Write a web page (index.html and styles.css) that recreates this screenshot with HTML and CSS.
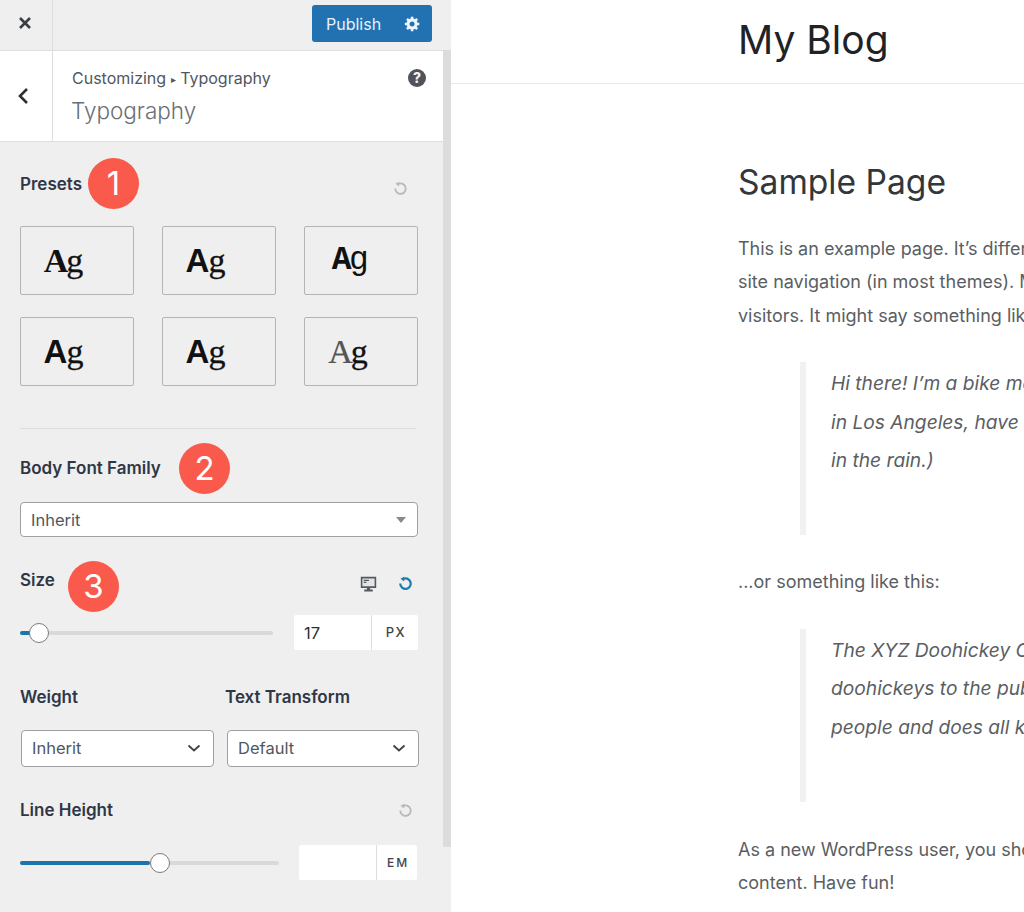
FILE: index.html
```html
<!DOCTYPE html>
<html lang="en">
<head>
<meta charset="utf-8">
<title>Typography</title>
<link rel="stylesheet" href="styles.css">
</head>
<body>
<div class="app">
  <aside class="sidebar">
    <div class="topbar">
      <div class="close-cell">
        <svg class="icon-close" viewBox="0 0 14 14"><path d="M2 2l10 10M12 2L2 12"/></svg>
      </div>
      <div class="publish">
        <span>Publish</span>
        <svg class="icon-gear" viewBox="0 0 20 20"><path d="M18 12h-2.18c-.17.7-.44 1.35-.81 1.93l1.54 1.54-2.1 2.1-1.54-1.54c-.58.36-1.23.63-1.91.79V19H8v-2.18c-.68-.16-1.33-.43-1.91-.79l-1.54 1.54-2.12-2.12 1.54-1.54c-.36-.58-.63-1.23-.79-1.91H1V9.03h2.17c.16-.7.44-1.35.8-1.94L2.43 5.55l2.1-2.1 1.54 1.54c.58-.37 1.24-.64 1.93-.81V2h3v2.18c.68.16 1.33.43 1.91.79l1.54-1.54 2.12 2.12-1.54 1.54c.36.59.64 1.24.8 1.94H18V12zm-8.5 1.5c1.66 0 3-1.34 3-3s-1.34-3-3-3-3 1.34-3 3 1.34 3 3 3z"/></svg>
      </div>
    </div>
    <div class="panel">
      <div class="panel-main">
        <header class="section-head">
          <div class="back-cell">
            <svg class="icon-back" viewBox="0 0 12 18"><path d="M10 2L3 9l7 7"/></svg>
          </div>
          <div class="section-title">
            <div class="crumb">Customizing <span class="crumb-sep">▸</span> Typography</div>
            <div class="title">Typography</div>
          </div>
          <div class="help">?</div>
        </header>
        <div class="controls">
          <div class="row-head presets-head">
            <span class="label">Presets</span>
            <svg class="icon-reset muted" viewBox="0 0 16 16"><path d="M5 3.4A5.6 5.6 0 1 1 2.4 8"/><path class="fill" d="M6.6 0.8v5L2.6 3z"/></svg>
          </div>
          <div class="presets">
            <div class="preset"><span class="serif bold">A</span><span class="serif">g</span></div>
            <div class="preset"><span class="sans bold">A</span><span class="serif">g</span></div>
            <div class="preset preset-narrow"><span class="mono bold">A</span><span class="mono">g</span></div>
            <div class="preset"><span class="sans bold">A</span><span class="serif">g</span></div>
            <div class="preset"><span class="sans bold">A</span><span class="serif">g</span></div>
            <div class="preset preset-last"><span class="serif faint">A</span><span class="serif">g</span></div>
          </div>
          <div class="divider"></div>
          <div class="row-head body-head"><span class="label">Body Font Family</span></div>
          <div class="select select-font">
            <span>Inherit</span>
            <span class="caret"></span>
          </div>
          <div class="row-head size-head">
            <span class="label">Size</span>
            <span class="head-icons">
              <svg class="icon-desktop" viewBox="0 0 16 16"><path class="screen" d="M1.500 1.500h13v9h-13z"/><path class="glyph" d="M3.500 3.500h5v1.200h-5zM3.500 5.500h2.500v1.200H3.500z"/><path class="glyph" d="M6.500 10.500h3v2.300h2.500V14.500H4v-1.700h2.500z"/></svg>
              <svg class="icon-reset active" viewBox="0 0 16 16"><path d="M5 3.4A5.6 5.6 0 1 1 2.4 8"/><path class="fill" d="M6.6 0.8v5L2.6 3z"/></svg>
            </span>
          </div>
          <div class="slider-row size-row">
            <div class="slider slider-size">
              <div class="slider-fill fill-size"></div>
              <div class="knob knob-size"></div>
            </div>
            <div class="unit-input input-size">
              <span class="value">17</span>
              <span class="unit">PX</span>
            </div>
          </div>
          <div class="pair pair-labels">
            <span class="label">Weight</span>
            <span class="label">Text Transform</span>
          </div>
          <div class="pair pair-selects">
            <div class="select select-small">
              <span>Inherit</span>
              <svg class="chevron" viewBox="0 0 14 8"><path d="M1.500 1.500L7 6.500l5.500-5"/></svg>
            </div>
            <div class="select select-small">
              <span>Default</span>
              <svg class="chevron" viewBox="0 0 14 8"><path d="M1.500 1.500L7 6.500l5.500-5"/></svg>
            </div>
          </div>
          <div class="row-head line-head">
            <span class="label">Line Height</span>
            <svg class="icon-reset muted shift" viewBox="0 0 16 16"><path d="M5 3.4A5.6 5.6 0 1 1 2.4 8"/><path class="fill" d="M6.6 0.8v5L2.6 3z"/></svg>
          </div>
          <div class="slider-row line-row">
            <div class="slider slider-line">
              <div class="slider-fill fill-line"></div>
              <div class="knob knob-line"></div>
            </div>
            <div class="unit-input input-line">
              <span class="value"></span>
              <span class="unit unit-em">EM</span>
            </div>
          </div>
        </div>
      </div>
      <div class="scrollbar"></div>
    </div>
    <div class="badge badge-1">1</div>
    <div class="badge badge-2">2</div>
    <div class="badge badge-3">3</div>
  </aside>
  <main class="preview">
    <div class="site-header"><h1>My Blog</h1></div>
    <article class="page">
      <h2>Sample Page</h2>
      <p class="first">This is an example page. It’s different from a blog post because it will stay in one place and will show up in your<br>site navigation (in most themes). Most people start with an About page that introduces them to potential site<br>visitors. It might say something like this:</p>
      <blockquote>Hi there! I’m a bike messenger by day, aspiring actor by night, and this is my website. I live<br>in Los Angeles, have a great dog named Jack, and I like piña coladas. (And gettin’ caught<br>in the rain.)</blockquote>
      <p class="mid">...or something like this:</p>
      <blockquote>The XYZ Doohickey Company was founded in 1971, and has been providing quality<br>doohickeys to the public ever since. Located in Gotham City, XYZ employs over 2,000<br>people and does all kinds of awesome things for the Gotham community.</blockquote>
      <p class="last">As a new WordPress user, you should go to your dashboard to delete this page and create new pages for your<br>content. Have fun!</p>
    </article>
  </main>
</div>
</body>
</html>
```

FILE: styles.css
```css
* { box-sizing: border-box; }
html, body { margin: 0; height: 100%; }
body { font-family: Inter, "Liberation Sans", sans-serif; background: #fff; overflow: hidden; }
svg { display: block; flex: none; }

.app { display: flex; width: 1024px; height: 912px; overflow: hidden; }

/* Sidebar */
.sidebar { position: relative; flex: none; width: 451px; height: 912px; background: #efefef; display: flex; flex-direction: column; }
.topbar { flex: none; height: 51px; display: flex; align-items: flex-start; justify-content: space-between; border-bottom: 1px solid #dedede; }
.close-cell { width: 53px; height: 50px; border-right: 1px solid #dedede; display: flex; align-items: center; justify-content: center; padding-bottom: 5px; padding-right: 3px; }
.icon-close { width: 14px; height: 14px; fill: none; stroke: #3a3d42; stroke-width: 2.6; }
.publish { width: 120px; height: 37px; margin: 5px 19px 0 0; background: #2271b1; border-radius: 3px; color: #e8f2fa; font-size: 16px; display: flex; align-items: center; justify-content: space-between; padding: 0 11px 0 14px; }
.icon-gear { width: 17px; height: 17px; fill: #eef5fa; }

.panel { flex: 1; display: flex; min-height: 0; }
.panel-main { width: 443px; flex: none; }
.scrollbar { width: 8px; height: 797px; background: #dcdcdc; margin-top: -1px; }

.section-head { height: 91px; background: #fff; border-bottom: 1px solid #dddddd; display: flex; position: relative; }
.back-cell { width: 53px; height: 90px; border-right: 1px solid #dedede; display: flex; align-items: center; justify-content: center; padding-right: 6px; }
.icon-back { width: 12px; height: 18px; fill: none; stroke: #2c3035; stroke-width: 2.6; }
.section-title { padding: 17px 0 0 19px; flex: 1; }
.crumb { font-size: 16px; line-height: 20px; color: #50575e; }
.crumb-sep { font-size: 10px; vertical-align: 1px; }
.title { font-size: 22.500px; font-weight: 300; line-height: 32px; color: #6a6f75; margin: 6px 0 0 -1px; }
.help { width: 18px; height: 18px; border-radius: 50%; background: #50545a; color: #f2f2f2; font-size: 14px; font-weight: 800; line-height: 18px; text-align: center; margin: 18px 17px 0 0; }

.controls { padding: 30px 25px 0 20px; }
.row-head { height: 24px; display: flex; align-items: center; justify-content: space-between; }
.label { font-size: 17px; font-weight: 600; line-height: 24px; color: #2f3747; }

.icon-reset { width: 15px; height: 15px; fill: none; stroke-width: 2.4; }
.icon-reset .fill { stroke: none; }
.icon-reset.muted { stroke: #b9b9b9; margin: 8px 10px 0 0; stroke-width: 2; }
.icon-reset.muted .fill { fill: #b9b9b9; }
.icon-reset.active { stroke: #1c7ea8; }
.icon-reset.active .fill { fill: #1c7ea8; }
.icon-reset.shift { margin: 0 5px 0 0; }

.presets-head { margin-bottom: 30px; }
.presets { display: grid; grid-template-columns: repeat(3, 114px); justify-content: space-between; row-gap: 22px; }
.preset { height: 69px; border: 1px solid #b4b4b4; border-radius: 2px; display: flex; align-items: center; justify-content: center; padding: 0 27px 0 0; font-size: 34px; line-height: 1; color: #111; }
.preset-narrow { padding-right: 24px; }
.preset-last { padding-right: 26px; }
.serif { font-family: "Liberation Serif", serif; -webkit-text-stroke: 0.3px #111; }
.serif.bold { letter-spacing: -2px; -webkit-text-stroke: 0; }
.sans { font-family: "Liberation Sans", sans-serif; font-size: 33px; letter-spacing: -1px; }
.mono { font-family: "Liberation Mono", monospace; font-size: 33px; letter-spacing: -2.500px; }
.bold { font-weight: 700; }
.serif.faint { color: #555; -webkit-text-stroke: 0.2px #333; letter-spacing: -2px; }

.divider { height: 1px; width: 396px; margin-top: 42px; background: #dcdcdc; }
.body-head { margin-top: 27px; }

.select { background: #fff; border: 1px solid #a0a0a0; border-radius: 4px; display: flex; align-items: center; justify-content: space-between; color: #50575e; font-size: 16.500px; }
.select-font { margin-top: 22px; height: 35px; padding: 0 11px 0 10px; }
.caret { width: 0; height: 0; border-left: 5px solid transparent; border-right: 5px solid transparent; border-top: 6px solid #8a8a8a; }

.size-head { margin-top: 31px; }
.head-icons { display: flex; align-items: center; gap: 21px; padding: 6px 5px 0 0; }
.icon-desktop { width: 17px; height: 17px; margin-top: 3px; }
.icon-desktop .screen { fill: #e4e4e4; stroke: #55595f; stroke-width: 1.500; }
.icon-desktop .glyph { fill: #55595f; }

.slider-row { height: 35px; margin-top: 23px; display: flex; justify-content: space-between; align-items: center; }
.slider { position: relative; height: 4px; background: #d9d9d9; border-radius: 2px; }
.slider-size { width: 253px; }
.slider-line { width: 259px; }
.slider-fill { height: 4px; background: #1d74ad; border-radius: 2px; }
.fill-size { width: 12px; }
.fill-line { width: 130px; }
.knob { position: absolute; top: -8px; width: 20px; height: 20px; border-radius: 50%; background: #fff; border: 1px solid #7b7b7b; }
.knob-size { left: 9px; }
.knob-line { left: 130px; }

.unit-input { display: flex; height: 35px; background: #fff; border-radius: 2px; }
.input-size { width: 124px; }
.input-line { width: 118px; margin-right: 1px; }
.value { flex: 1; padding: 1px 0 0 10px; font-size: 16.500px; line-height: 34px; color: #2c3035; border-right: 1px solid #dedede; }
.unit { flex: none; width: 46px; padding-left: 2px; text-align: center; font-size: 13px; font-weight: 500; line-height: 35px; letter-spacing: 1.600px; color: #3f444a; }
.unit-em { width: 40px; letter-spacing: 2px; font-size: 12px; }

.pair { display: grid; }
.pair-labels { grid-template-columns: 193px 193px; column-gap: 12px; margin-top: 34px; padding-top: 1px; }
.pair-selects { grid-template-columns: 193px 192px; column-gap: 13px; margin: 21px -1px 0 1px; }
.select-small { height: 37px; padding: 0 12px 1px 10px; }
.chevron { width: 14px; height: 8px; fill: none; stroke: #3c4248; stroke-width: 1.800; }

.line-head { margin-top: 31px; }

/* Annotations */
.badge { position: absolute; width: 51px; height: 51px; border-radius: 50%; background: #fa5a4b; color: #fff; font-size: 33px; line-height: 51px; text-align: center; }
.badge-1 { left: 88px; top: 158px; }
.badge-2 { left: 179px; top: 443px; }
.badge-3 { left: 68px; top: 561px; }

/* Preview */
.preview { flex: 1; min-width: 0; overflow: hidden; background: #fff; white-space: nowrap; }
.site-header { height: 84px; border-bottom: 1px solid #e9e9e9; padding-left: 287px; }
h1 { margin: 0; padding-top: 16px; font-size: 39px; font-weight: 400; line-height: 48px; color: #1f2226; }
.page { padding-left: 288px; }
h2 { margin: 76px 0 0 -1px; font-size: 33.600px; font-weight: 400; line-height: 44px; color: #33373b; }
p { margin: 0 0 0 -1px; font-size: 18px; line-height: 33.400px; color: #5a5e63; }
.first { margin-top: 28px; }
.mid { margin-top: 30px; }
.last { margin-top: 31px; }
blockquote { margin: 30px 0 0 61px; height: 173px; border-left: 6px solid #f1f1f1; padding: 2px 0 0 25px; font-size: 19.200px; font-style: italic; line-height: 38.500px; color: #5a5e63; }
```
